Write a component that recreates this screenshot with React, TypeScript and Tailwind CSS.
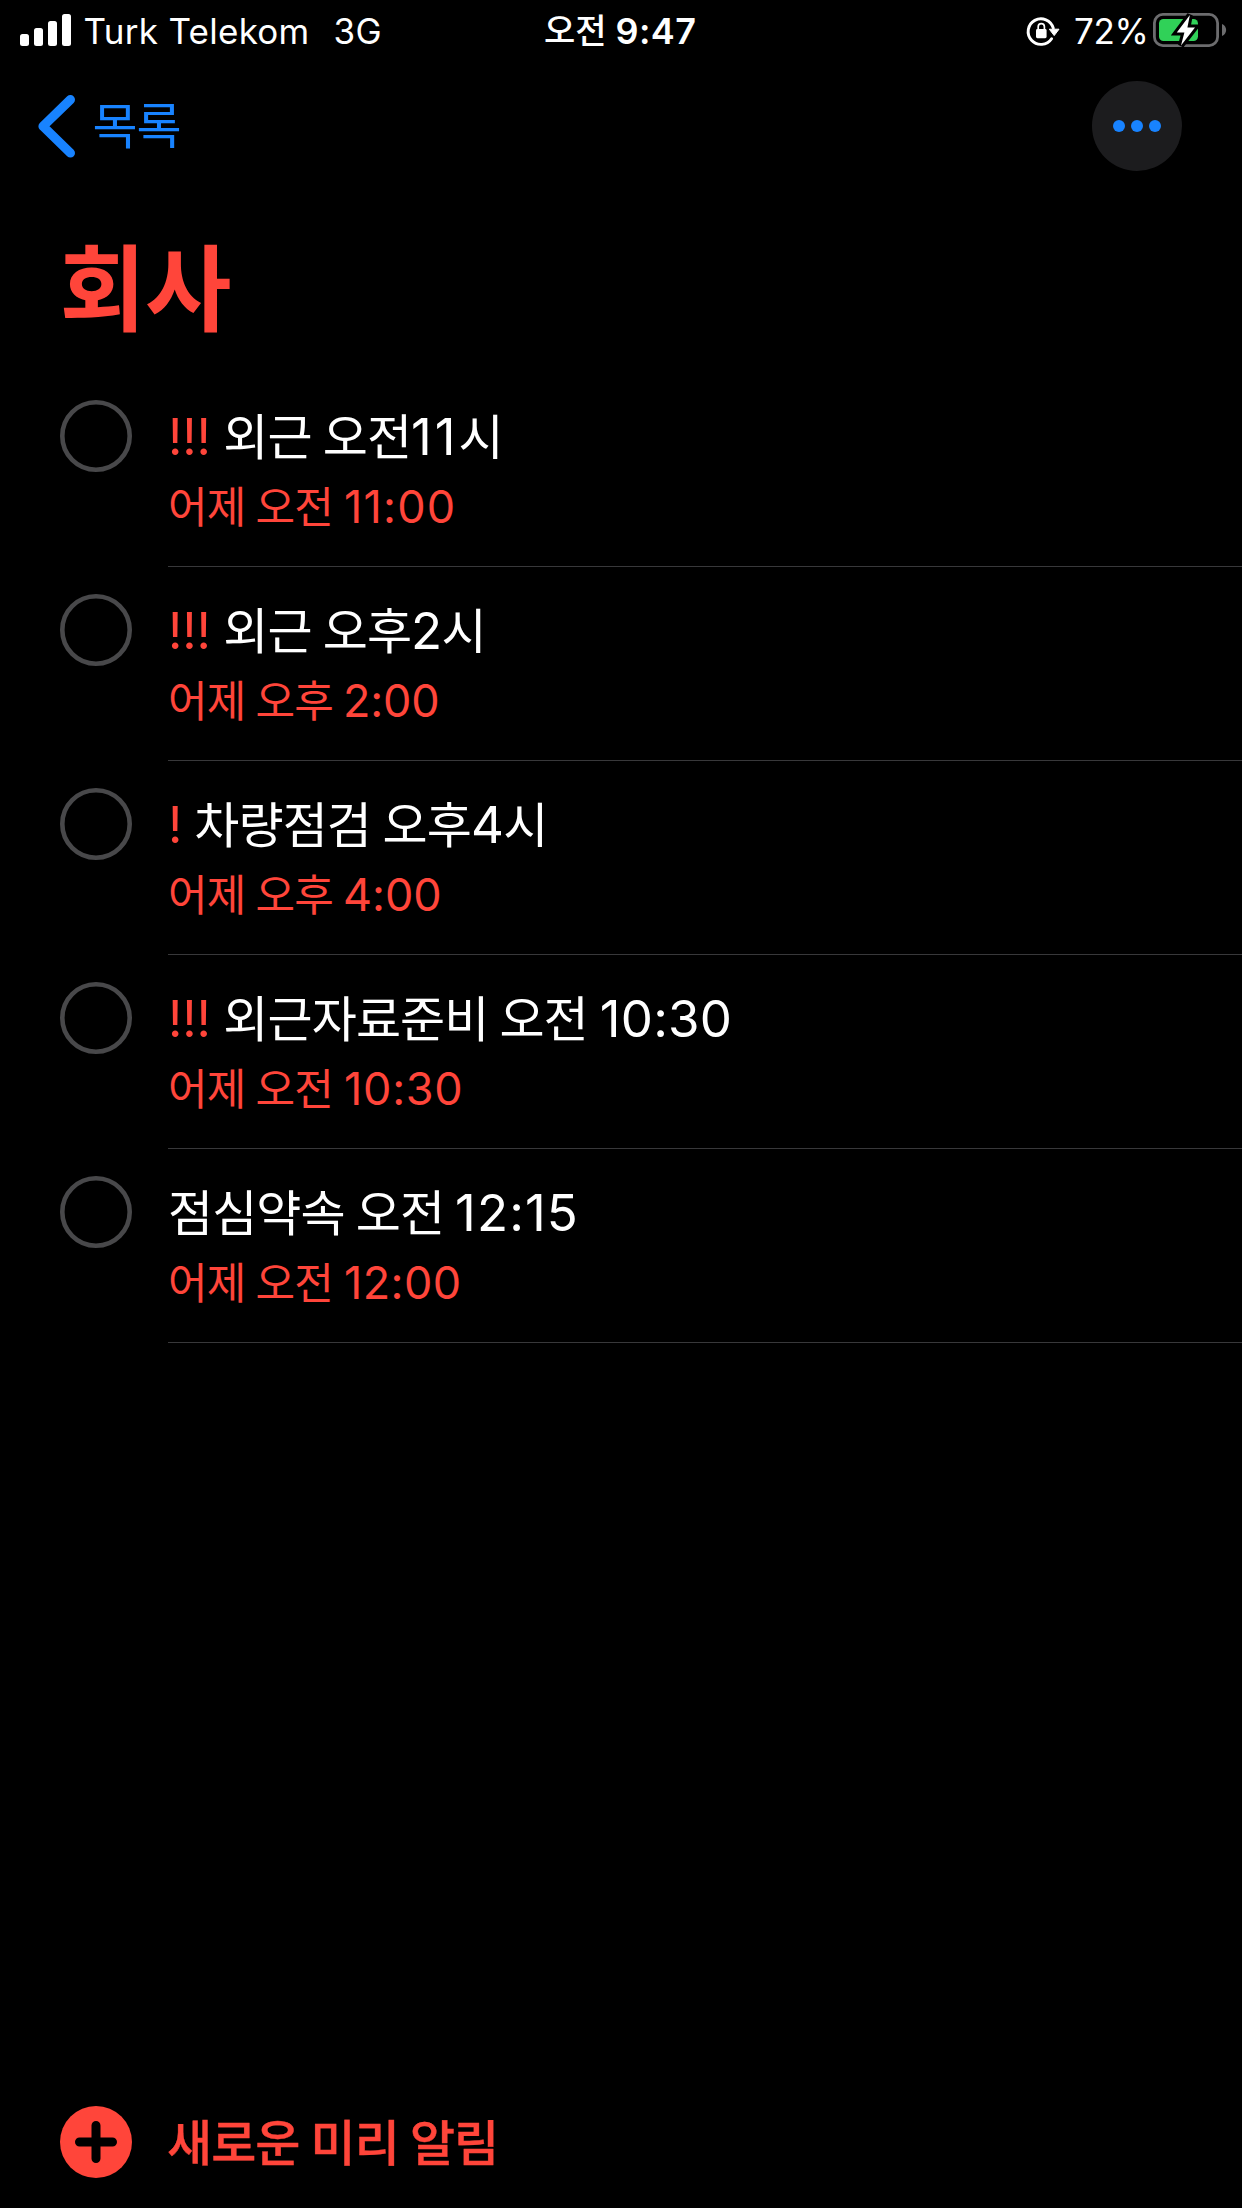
type Segment = { text: string; cls: string };
type Reminder = { title: Segment[]; due: Segment[] };

const KR = "font-['Noto_Sans_CJK_KR',sans-serif] text-[49px] tracking-[-0.9px]";
const LATIN = "font-['Inter',sans-serif] text-[51px]";
const DUE_KR = "font-['Noto_Sans_CJK_KR',sans-serif] text-[43px] tracking-[-0.8px]";
const DUE_LATIN = "font-['Inter',sans-serif] text-[45px]";
const MARK = "font-['Inter',sans-serif] text-[50px] tracking-[-0.1px] text-[#ff453a]";

const reminders: Reminder[] = [
  {
    title: [
      { text: '!!!', cls: `${MARK} mr-[12.5px]` },
      { text: '외근', cls: `${KR} mr-[11px]` },
      { text: '오전', cls: KR },
      { text: '11', cls: `${LATIN} tracking-[3px]` },
      { text: '시', cls: KR },
    ],
    due: [
      { text: '어제', cls: `${DUE_KR} mr-[10px]` },
      { text: '오전', cls: `${DUE_KR} mr-[11px]` },
      { text: '11:00', cls: `${DUE_LATIN} tracking-[1.2px]` },
    ],
  },
  {
    title: [
      { text: '!!!', cls: `${MARK} mr-[12.5px]` },
      { text: '외근', cls: `${KR} mr-[11px]` },
      { text: '오후', cls: KR },
      { text: '2', cls: `${LATIN} tracking-[-0.7px]` },
      { text: '시', cls: KR },
    ],
    due: [
      { text: '어제', cls: `${DUE_KR} mr-[10px]` },
      { text: '오후', cls: `${DUE_KR} mr-[10px]` },
      { text: '2:00', cls: `${DUE_LATIN} tracking-[-0.2px]` },
    ],
  },
  {
    title: [
      { text: '!', cls: `${MARK} mr-[12px]` },
      { text: '차량점검', cls: `${KR} mr-[11.5px]` },
      { text: '오후', cls: KR },
      { text: '4', cls: `${LATIN} tracking-[-0.7px]` },
      { text: '시', cls: KR },
    ],
    due: [
      { text: '어제', cls: `${DUE_KR} mr-[10px]` },
      { text: '오후', cls: `${DUE_KR} mr-[10px]` },
      { text: '4:00', cls: `${DUE_LATIN} tracking-[-0.1px]` },
    ],
  },
  {
    title: [
      { text: '!!!', cls: `${MARK} mr-[12.5px]` },
      { text: '외근자료준비', cls: `${KR} mr-[11px]` },
      { text: '오전', cls: `${KR} mr-[12px]` },
      { text: '10:30', cls: `${LATIN} tracking-[0.2px]` },
    ],
    due: [
      { text: '어제', cls: `${DUE_KR} mr-[10px]` },
      { text: '오전', cls: `${DUE_KR} mr-[11px]` },
      { text: '10:30', cls: `${DUE_LATIN} tracking-[0.7px]` },
    ],
  },
  {
    title: [
      { text: '점심약속', cls: `${KR} mr-[11px]` },
      { text: '오전', cls: `${KR} mr-[11px]` },
      { text: '12:15', cls: `${LATIN} tracking-[1.1px]` },
    ],
    due: [
      { text: '어제', cls: `${DUE_KR} mr-[10px]` },
      { text: '오전', cls: `${DUE_KR} mr-[11px]` },
      { text: '12:00', cls: `${DUE_LATIN} tracking-[0.4px]` },
    ],
  },
];

function Line({ segments }: { segments: Segment[] }) {
  return (
    <>
      {segments.map((s, i) => (
        <span key={i} className={s.cls}>
          {s.text}
        </span>
      ))}
    </>
  );
}

function StatusBar() {
  return (
    <header className="flex h-[62px] shrink-0 items-start whitespace-nowrap font-['Inter',sans-serif] text-[35px] leading-[62px]">
      <div className="flex w-[544px] items-start">
        <div className="ml-[20px] flex h-[46px] items-end gap-[5px]">
          <i className="h-[12px] w-[9px] rounded-[2.5px] bg-white" />
          <i className="h-[18px] w-[9px] rounded-[2.5px] bg-white" />
          <i className="h-[25px] w-[9px] rounded-[2.5px] bg-white" />
          <i className="h-[32px] w-[9px] rounded-[2.5px] bg-white" />
        </div>
        <span className="ml-[12.5px] w-[250px] tracking-[0.28px]">Turk Telekom</span>
        <span className="tracking-[0.5px]">3G</span>
      </div>
      <div className="flex items-start">
        <span className="font-['Noto_Sans_CJK_KR',sans-serif] text-[34px] font-medium leading-[58px]">오전</span>
        <span className="ml-[9px] text-[36px] font-semibold tracking-[0.4px]">9:47</span>
      </div>
      <div className="ml-auto flex items-start">
        <svg className="mr-[13px] h-[60px] w-[36px]" viewBox="1025 0 36 60" fill="none">
          <path d="M1053.3 28.2 A12.8 12.8 0 1 0 1051.6 38.7" stroke="white" strokeWidth="2.9" strokeLinecap="round" />
          <path d="M1049.3 29.2 H1059 L1054.2 35.6 Z" fill="white" stroke="white" strokeWidth="1" strokeLinejoin="round" />
          <rect x="1036" y="29" width="10.6" height="9.2" rx="1.4" fill="white" />
          <path d="M1038.2 30 V26.8 A3.1 3.1 0 0 1 1044.4 26.8 V30" stroke="white" strokeWidth="1.7" />
        </svg>
        <span className="w-[78px] tracking-[-0.3px]">72%</span>
        <svg className="h-[60px] w-[90px]" viewBox="1152 0 90 60" fill="none">
          <rect x="1154.4" y="14.4" width="63.2" height="31.2" rx="8.5" stroke="#6c6c6e" strokeWidth="2.8" />
          <path d="M1222 24 C1227.5 26 1227.5 34 1222 36 Z" fill="#6c6c6e" />
          <rect x="1159" y="19" width="39" height="22" rx="4.5" fill="#30d158" />
          <path
            d="M1189.9 15 L1176.8 32.4 H1184.4 L1181 45.6 L1195 27.6 H1187.4 Z"
            fill="black"
            stroke="black"
            strokeWidth="6"
          />
          <path d="M1189.9 15 L1176.8 32.4 H1184.4 L1181 45.6 L1195 27.6 H1187.4 Z" fill="white" />
        </svg>
      </div>
    </header>
  );
}

export default function App() {
  return (
    <div className="flex h-[2208px] w-full flex-col overflow-hidden bg-black text-white">
      <StatusBar />

      <nav className="flex h-[120px] shrink-0 items-start justify-between pr-[60px]">
        <button className="flex items-start pl-[36px] text-[#1883ff]">
          <svg className="mt-[29px] h-[70px] w-[44px]" viewBox="36 91 44 70" fill="none">
            <path
              d="M70.4 99.6 L43 126.3 L70.4 153"
              stroke="currentColor"
              strokeWidth="9.2"
              strokeLinecap="round"
              strokeLinejoin="round"
            />
          </svg>
          <span className="ml-[12.5px] font-['Noto_Sans_CJK_KR',sans-serif] text-[49px] leading-[122px] tracking-[-1px]">
            목록
          </span>
        </button>
        <button className="mt-[19px] flex size-[90px] items-center justify-center gap-[6px] rounded-full bg-[#1c1c1e]">
          <i className="size-[12px] rounded-full bg-[#1883ff]" />
          <i className="size-[12px] rounded-full bg-[#1883ff]" />
          <i className="size-[12px] rounded-full bg-[#1883ff]" />
        </button>
      </nav>

      <h1 className="h-[191px] shrink-0 pl-[59.5px] pt-[11px] font-['Noto_Sans_CJK_KR',sans-serif] text-[94px] font-bold leading-[181px] tracking-[-1px] text-[#ff453a]">
        회사
      </h1>

      <ul className="pl-[60px]">
        {reminders.map((r, i) => (
          <li key={i} className="flex h-[194px] gap-[36px]">
            <svg className="mt-[27px] size-[72px] shrink-0" viewBox="0 0 72 72">
              <circle cx="36" cy="36" r="33.7" fill="none" stroke="#48484a" strokeWidth="4.6" />
            </svg>
            <div className="flex grow flex-col border-b border-[#38383a] pt-[31px] whitespace-nowrap">
              <p className="flex h-[60px] items-baseline leading-[60px]">
                <Line segments={r.title} />
              </p>
              <p className="mt-[10px] flex h-[60px] items-baseline leading-[60px] text-[#ff453a]">
                <Line segments={r.due} />
              </p>
            </div>
          </li>
        ))}
      </ul>

      <footer className="mt-auto flex items-start pb-[30px] pl-[60px] text-[#ff453a]">
        <svg className="size-[72px]" viewBox="0 0 72 72">
          <circle cx="36" cy="36" r="36" fill="currentColor" />
          <path d="M36 19.5 V52.5 M19.5 36 H52.5" stroke="black" strokeWidth="9" strokeLinecap="round" />
        </svg>
        <div className="ml-[35px] flex gap-[11px] font-['Noto_Sans_CJK_KR',sans-serif] text-[49px] font-medium leading-[67px] tracking-[-0.9px] [-webkit-text-stroke:0.4px_#ff453a]">
          <span>새로운</span>
          <span>미리</span>
          <span>알림</span>
        </div>
      </footer>
    </div>
  );
}
